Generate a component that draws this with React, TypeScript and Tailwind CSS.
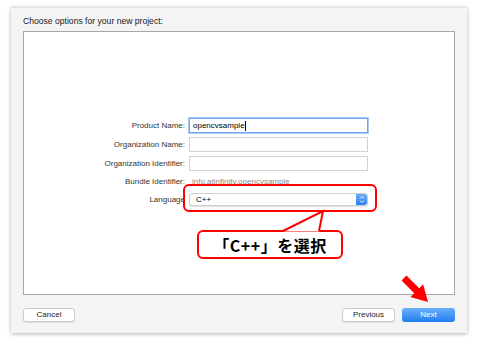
import React from "react";

const fields = [
  { label: "Product Name:", kind: "focus", value: "opencvsample" },
  { label: "Organization Name:", kind: "input", value: "" },
  { label: "Organization Identifier:", kind: "input", value: "" },
  { label: "Bundle Identifier:", kind: "text", value: "info.atinfinity.opencvsample" },
  { label: "Language", kind: "popup", value: "C++" },
];

const Field = ({ kind, value }: { kind: string; value: string }) => {
  if (kind === "focus") {
    return (
      <div className="h-[15px] w-[179px] bg-white border border-[#6fa6ee] ring-1 ring-[#a9cdf7] flex items-center px-[3px] text-[8px] text-black">
        {value}
        <span className="w-px h-[10px] bg-black" />
      </div>
    );
  }
  if (kind === "input") {
    return <div className="h-[15px] w-[179px] bg-white border border-[#d2d2d2]" />;
  }
  if (kind === "text") {
    return <div className="h-[14px] flex items-center pl-[3px] text-[8px] text-[#8a8a8a]">{value}</div>;
  }
  return (
    <div className="h-[13px] w-[179px] bg-white border border-[#cfcfcf] rounded-[3px] shadow-[0_1px_1px_rgba(0,0,0,0.12)] flex items-center justify-between pl-[6px] text-[8px] text-black">
      {value}
      <div className="h-full w-[11px] rounded-r-[3px] bg-gradient-to-b from-[#6aaef8] to-[#2a7ef0] flex items-center justify-center">
        <svg width="6" height="9" viewBox="0 0 6 9">
          <path d="M1 3.5 L3 1.5 L5 3.5 M1 5.5 L3 7.5 L5 5.5" fill="none" stroke="white" strokeWidth="1" />
        </svg>
      </div>
    </div>
  );
};

export default function App() {
  return (
    <div className="relative w-[478px] h-[346px] bg-white pt-[7px] pl-[11px] font-['Liberation_Sans',Arial,sans-serif]">
      <div className="w-[456px] h-[326px] bg-[#f4f4f4] border-t border-[#e2e2e2] shadow-[0_1px_4px_rgba(0,0,0,0.3)] flex flex-col px-[12px]">
        <div className="pt-[8px] h-[23px] text-[8.6px] leading-[10px] text-[#1a1a1a]">Choose options for your new project:</div>
        <div className="h-[264px] bg-white border border-[#a8a8a8] pt-[86px]">
          <div className="grid grid-cols-[161px_1fr] gap-x-[4px] gap-y-[4px] items-center">
            {fields.map((f) => (
              <React.Fragment key={f.label}>
                <div className="text-right text-[8px] text-[#333]">{f.label}</div>
                <Field kind={f.kind} value={f.value} />
              </React.Fragment>
            ))}
          </div>
        </div>
        <div className="mt-[13px] flex items-center text-[8px]">
          <button className="h-[14px] w-[52px] bg-white border border-[#cdcdcd] rounded-[3px] shadow-[0_1px_1px_rgba(0,0,0,0.1)] text-[#222]">Cancel</button>
          <div className="flex-1" />
          <button className="h-[14px] w-[53px] bg-white border border-[#cdcdcd] rounded-[3px] shadow-[0_1px_1px_rgba(0,0,0,0.1)] text-[#222]">Previous</button>
          <button className="ml-[7px] h-[14px] w-[53px] rounded-[3px] bg-gradient-to-b from-[#69aef9] to-[#1e7cf2] text-white">Next</button>
        </div>
      </div>

      {/* annotations */}
      <div className="absolute left-[183px] top-[184px] w-[194px] h-[28px] border-2 border-[#ff0000] rounded-[6px]" />
      <div className="absolute left-[197px] top-[230px] w-[146px] h-[29px] bg-white border-2 border-[#ff0000] rounded-[6px] flex items-center justify-center text-[16px] font-bold text-black font-['Noto_Sans_CJK_JP',sans-serif] leading-none tracking-[0.5px]">
        「C++」を選択
      </div>
      <svg className="absolute left-0 top-0" width="478" height="346">
        <polygon points="283,231.5 323,211 319,231.5" fill="white" />
        <polyline points="283,231 323,211 319,231" fill="none" stroke="#ff0000" strokeWidth="2" strokeLinejoin="miter" />
        <polygon
          transform="translate(404,278) rotate(45)"
          points="0,-3.5 18,-3.5 18,-9 34,0 18,9 18,3.5 0,3.5"
          fill="#ff0000"
        />
      </svg>
    </div>
  );
}
